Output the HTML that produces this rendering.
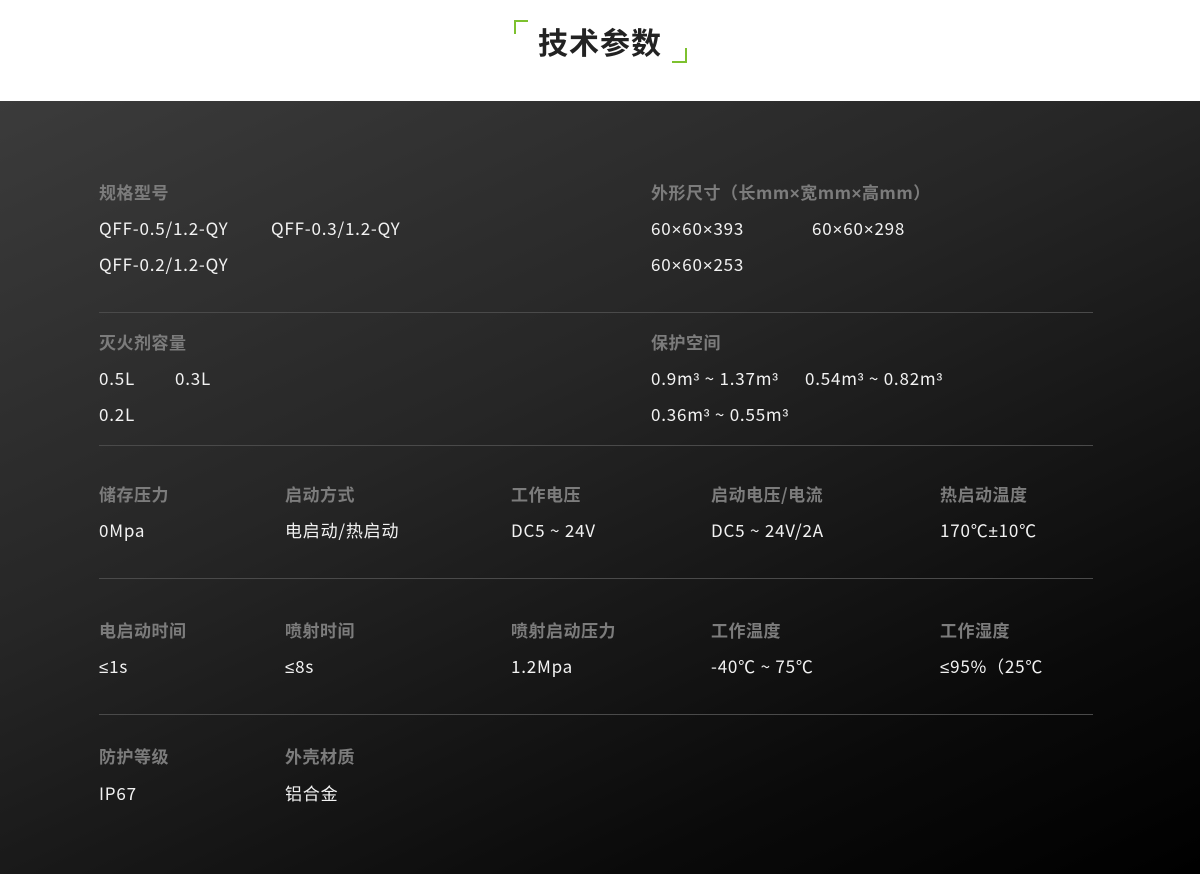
<!DOCTYPE html>
<html><head><meta charset="utf-8"><style>
*{margin:0;padding:0;box-sizing:border-box}
body{width:1200px;height:874px;overflow:hidden;background:#fff;font-family:"Liberation Sans","Noto Sans CJK SC",sans-serif;position:relative}
.title{position:absolute;left:0;width:1200px;top:20px;text-align:center;font-size:30px;font-weight:bold;color:#222;letter-spacing:1px;font-family:"Noto Sans CJK SC",sans-serif;line-height:42px}
.c1{position:absolute;left:514px;top:20px;width:14px;height:14px;border-left:2px solid #7dc12f;border-top:2px solid #7dc12f}
.c2{position:absolute;left:672px;top:48px;width:15px;height:15px;border-right:2px solid #7dc12f;border-bottom:2px solid #7dc12f}
.dark{position:absolute;left:0;top:101px;width:1200px;height:773px;background:linear-gradient(155deg,#3b3b3b 0%,#262626 40%,#0a0a0a 80%,#000 100%)}
.l{position:absolute;font-size:17px;font-weight:bold;color:#7c7c7c;font-family:"Noto Sans CJK SC",sans-serif;line-height:20px;white-space:nowrap;margin-top:-1px;letter-spacing:0.5px}
.v{position:absolute;font-size:17px;color:#f2f2f2;font-family:"Noto Sans CJK SC",sans-serif;line-height:20px;white-space:nowrap;margin-top:-1px;letter-spacing:0.8px}
.s{font-family:"Liberation Sans",sans-serif}
.hr{position:absolute;left:99px;width:994px;height:1px;background:#4a4a4a}
</style></head><body>
<div class="c1"></div><div class="title">技术参数</div><div class="c2"></div>
<div class="dark">
<div class="l" style="left:99px;top:82px">规格型号</div>
<div class="v" style="left:99px;top:118px">QFF-0.5/1.2-QY</div>
<div class="v" style="left:271px;top:118px">QFF-0.3/1.2-QY</div>
<div class="v" style="left:99px;top:154px">QFF-0.2/1.2-QY</div>
<div class="l" style="left:651px;top:82px">外形尺寸（长mm<span class="s">×</span>宽mm<span class="s">×</span>高mm）</div>
<div class="v" style="left:651px;top:118px">60<span class="s">×</span>60<span class="s">×</span>393</div>
<div class="v" style="left:812px;top:118px">60<span class="s">×</span>60<span class="s">×</span>298</div>
<div class="v" style="left:651px;top:154px">60<span class="s">×</span>60<span class="s">×</span>253</div>
<div class="hr" style="top:211px"></div>
<div class="l" style="left:99px;top:232px">灭火剂容量</div>
<div class="v" style="left:99px;top:268px">0.5L</div>
<div class="v" style="left:175px;top:268px">0.3L</div>
<div class="v" style="left:99px;top:304px">0.2L</div>
<div class="l" style="left:651px;top:232px">保护空间</div>
<div class="v" style="left:651px;top:268px">0.9m<span class="s">³</span> ~ 1.37m<span class="s">³</span></div>
<div class="v" style="left:805px;top:268px">0.54m<span class="s">³</span> ~ 0.82m<span class="s">³</span></div>
<div class="v" style="left:651px;top:304px">0.36m<span class="s">³</span> ~ 0.55m<span class="s">³</span></div>
<div class="hr" style="top:344px"></div>
<div class="l" style="left:99px;top:384px">储存压力</div><div class="v" style="left:99px;top:420px">0Mpa</div>
<div class="l" style="left:285px;top:384px">启动方式</div><div class="v" style="left:285px;top:420px">电启动/热启动</div>
<div class="l" style="left:511px;top:384px">工作电压</div><div class="v" style="left:511px;top:420px">DC5 ~ 24V</div>
<div class="l" style="left:711px;top:384px">启动电压/电流</div><div class="v" style="left:711px;top:420px">DC5 ~ 24V/2A</div>
<div class="l" style="left:940px;top:384px">热启动温度</div><div class="v" style="left:940px;top:420px">170℃<span class="s">±</span>10℃</div>
<div class="hr" style="top:477px"></div>
<div class="l" style="left:99px;top:520px">电启动时间</div><div class="v" style="left:99px;top:556px"><span class="s">≤</span>1s</div>
<div class="l" style="left:285px;top:520px">喷射时间</div><div class="v" style="left:285px;top:556px"><span class="s">≤</span>8s</div>
<div class="l" style="left:511px;top:520px">喷射启动压力</div><div class="v" style="left:511px;top:556px">1.2Mpa</div>
<div class="l" style="left:711px;top:520px">工作温度</div><div class="v" style="left:711px;top:556px">-40℃ ~ 75℃</div>
<div class="l" style="left:940px;top:520px">工作湿度</div><div class="v" style="left:940px;top:556px"><span class="s">≤</span>95%（25℃</div>
<div class="hr" style="top:613px"></div>
<div class="l" style="left:99px;top:646px">防护等级</div><div class="v" style="left:99px;top:683px">IP67</div>
<div class="l" style="left:285px;top:646px">外壳材质</div><div class="v" style="left:285px;top:683px">铝合金</div>
</div>
</body></html>
